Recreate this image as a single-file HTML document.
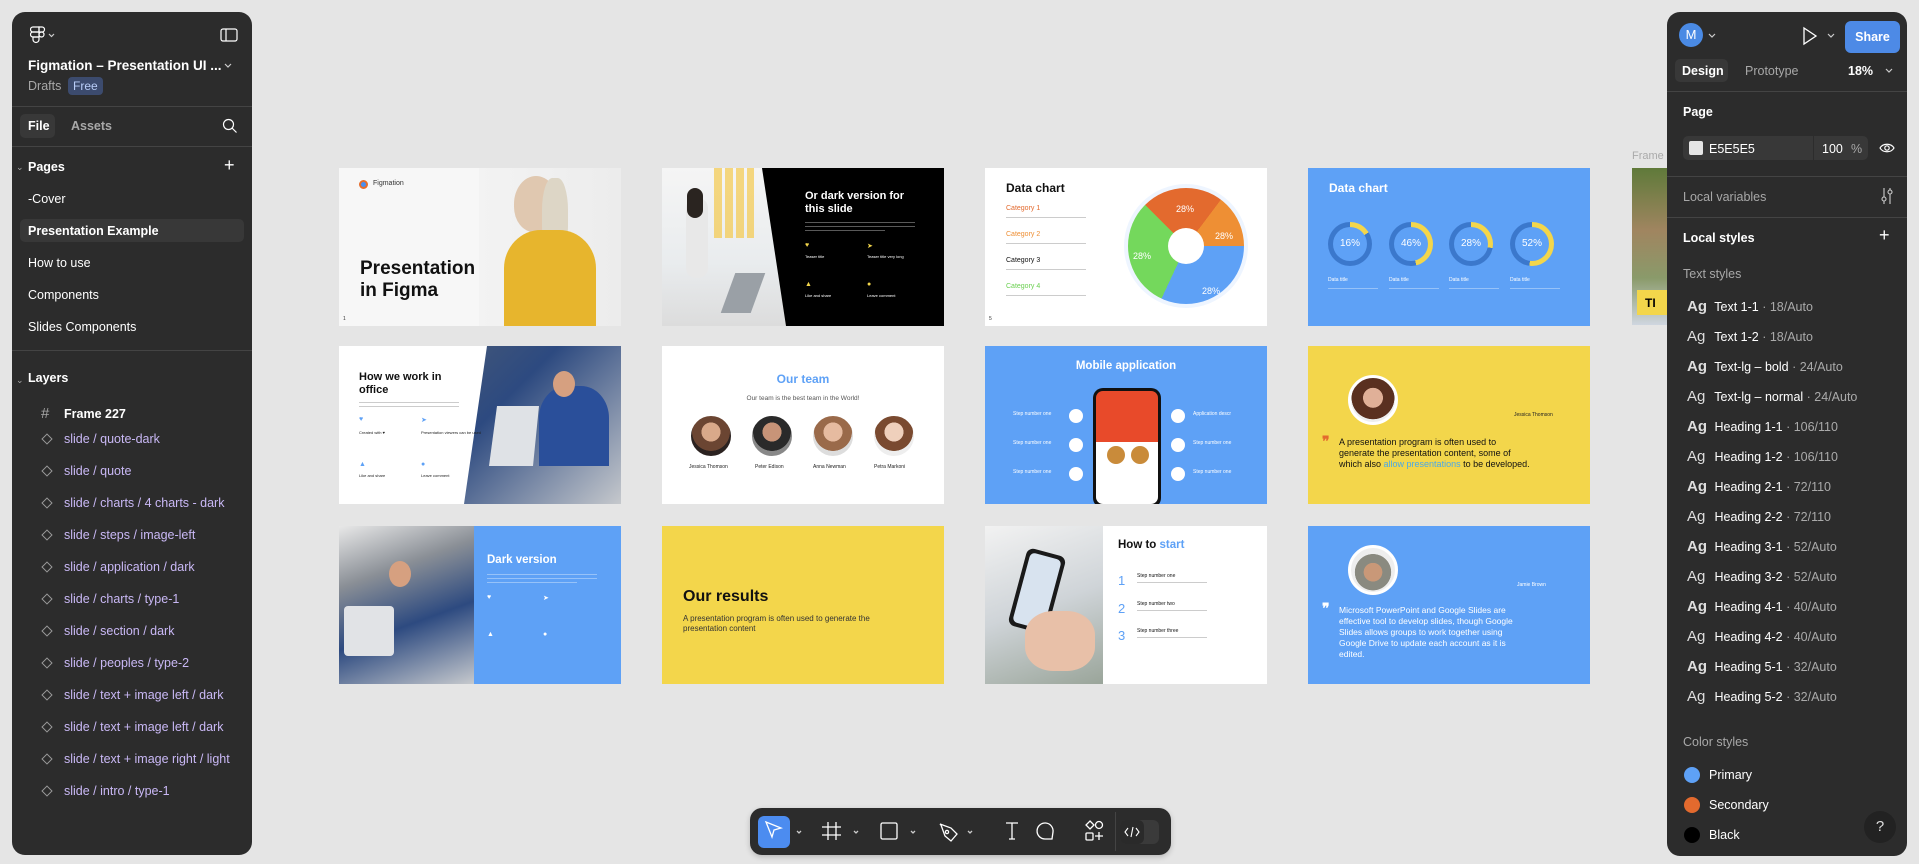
<!DOCTYPE html>
<html><head><meta charset="utf-8"><style>
*{box-sizing:border-box;margin:0;padding:0}
body{width:1919px;height:864px;background:#e5e5e5;font-family:"Liberation Sans",sans-serif;position:relative;overflow:hidden}
.a{position:absolute}
.panel{position:absolute;background:#2c2c2c;border-radius:13px;color:#fff;font-size:12.5px}
.sep{position:absolute;left:0;right:0;height:1px;background:#444}
.w{color:#fff}
.g{color:#a8a8a8}
.slide{position:absolute;width:282px;height:158px;overflow:hidden}
.lay{position:absolute;left:52px;color:#c9b8f5;font-size:12.5px}
.dia{position:absolute;left:31px;width:8px;height:8px;border:1.3px solid #999;transform:rotate(45deg)}
.ts{position:absolute;left:20px;font-size:12.5px;color:#fff}
.ts b{font-weight:400;font-size:15px;display:inline-block;width:24px;color:#ddd}
.ts span{color:#aaa}
.ring{position:absolute;width:44px;height:44px;border-radius:50%}
.ring i{position:absolute;left:5px;top:5px;width:34px;height:34px;border-radius:50%;background:#5ea1f6;color:#fff;font-style:normal;font-size:10px;text-align:center;line-height:34px}
.ln{position:absolute;height:2px;background:rgba(255,255,255,.35)}
.lnd{position:absolute;height:2px;background:#ccc}
.av{position:absolute;border-radius:50%;background:radial-gradient(circle at 50% 40%,#d9a98a 0 30%,#6b4532 31% 60%,#2b2220 61%);border:2px solid #fff}
</style></head><body>

<!-- LEFT PANEL -->
<div class="panel" style="left:12px;top:12px;width:240px;height:843px">
  <svg class="a" style="left:18px;top:14px" width="36" height="18" viewBox="0 0 36 18"><g fill="none" stroke="#fff" stroke-width="1.2"><path d="M3 1h6v5H3a2.5 2.5 0 010-5z"/><path d="M9 1h3a2.5 2.5 0 010 5H9z"/><path d="M3 6h6v5H3a2.5 2.5 0 010-5z"/><circle cx="11.5" cy="8.5" r="2.5"/><path d="M3 11h6v2.5a2.5 2.5 0 11-6-0z"/></g><path d="M19 8l2.5 2.5L24 8" stroke="#ccc" fill="none" stroke-width="1.2"/></svg>
  <svg class="a" style="left:208px;top:16px" width="18" height="14"><rect x="1" y="1" width="16" height="12" rx="2" fill="none" stroke="#fff" stroke-width="1.2"/><path d="M6 1v12" stroke="#fff" stroke-width="1.2"/></svg>
  <div class="a w" style="left:16px;top:46px;font-size:13.5px;font-weight:bold">Figmation – Presentation UI ...</div>
  <svg class="a" style="left:211px;top:50px" width="10" height="8"><path d="M2 2l3 3 3-3" stroke="#ccc" fill="none" stroke-width="1.2"/></svg>
  <div class="a g" style="left:16px;top:67px;font-size:12.5px">Drafts</div>
  <div class="a" style="left:56px;top:65px;background:#3c4b6e;color:#b9cdf8;border-radius:4px;padding:2px 5px;font-size:12px">Free</div>
  <div class="sep" style="top:94px"></div>
  <div class="a" style="left:8px;top:102px;width:35px;height:24px;background:#383838;border-radius:5px"></div>
  <div class="a w" style="left:16px;top:107px;font-weight:bold">File</div>
  <div class="a g" style="left:59px;top:107px;font-weight:bold">Assets</div>
  <svg class="a" style="left:210px;top:106px" width="16" height="16"><circle cx="6.5" cy="6.5" r="5" fill="none" stroke="#fff" stroke-width="1.2"/><path d="M10 10l4.5 4.5" stroke="#fff" stroke-width="1.2"/></svg>
  <div class="sep" style="top:134px"></div>
  <div class="a g" style="left:4px;top:150px;font-size:9px">⌄</div>
  <div class="a w" style="left:16px;top:148px;font-weight:bold">Pages</div>
  <div class="a w" style="left:212px;top:143px;font-size:18px;font-weight:300">+</div>
  <div class="a w" style="left:16px;top:180px">-Cover</div>
  <div class="a" style="left:8px;top:207px;width:224px;height:23px;background:#383838;border-radius:5px"></div>
  <div class="a w" style="left:16px;top:212px;font-weight:bold">Presentation Example</div>
  <div class="a w" style="left:16px;top:244px">How to use</div>
  <div class="a w" style="left:16px;top:276px">Components</div>
  <div class="a w" style="left:16px;top:308px">Slides Components</div>
  <div class="sep" style="top:338px"></div>
  <div class="a g" style="left:4px;top:363px;font-size:9px">⌄</div>
  <div class="a w" style="left:16px;top:359px;font-weight:bold">Layers</div>
  <div class="a g" style="left:29px;top:393px;font-size:15px">#</div>
  <div class="a w" style="left:52px;top:395px;font-weight:bold">Frame 227</div>
  <div class="dia" style="top:423px"></div><div class="lay" style="top:420px">slide / quote-dark</div>
  <div class="dia" style="top:455px"></div><div class="lay" style="top:452px">slide / quote</div>
  <div class="dia" style="top:487px"></div><div class="lay" style="top:484px">slide / charts / 4 charts - dark</div>
  <div class="dia" style="top:519px"></div><div class="lay" style="top:516px">slide / steps / image-left</div>
  <div class="dia" style="top:551px"></div><div class="lay" style="top:548px">slide / application / dark</div>
  <div class="dia" style="top:583px"></div><div class="lay" style="top:580px">slide / charts / type-1</div>
  <div class="dia" style="top:615px"></div><div class="lay" style="top:612px">slide / section / dark</div>
  <div class="dia" style="top:647px"></div><div class="lay" style="top:644px">slide / peoples / type-2</div>
  <div class="dia" style="top:679px"></div><div class="lay" style="top:676px">slide / text + image left / dark</div>
  <div class="dia" style="top:711px"></div><div class="lay" style="top:708px">slide / text + image left / dark</div>
  <div class="dia" style="top:743px"></div><div class="lay" style="top:740px">slide / text + image right / light</div>
  <div class="dia" style="top:775px"></div><div class="lay" style="top:772px">slide / intro / type-1</div>
</div>

<!-- ROW 1 -->
<div class="slide" style="left:339px;top:168px;background:#f7f7f7">
  <div class="a" style="left:140px;top:0;width:142px;height:158px;background:linear-gradient(90deg,#f3f3f3,#ececec)"></div>
  <div class="a" style="left:175px;top:8px;width:44px;height:56px;border-radius:50% 50% 45% 45%;background:#e0c8b0"></div>
  <div class="a" style="left:203px;top:10px;width:26px;height:80px;border-radius:40%;background:#ddd6c6"></div>
  <div class="a" style="left:165px;top:62px;width:92px;height:96px;border-radius:40% 40% 0 0;background:#e7b52d"></div>
  <div class="a" style="left:20px;top:12px;width:9px;height:9px;border-radius:50%;background:#4a8ff0;border:2px solid #e56d2c"></div>
  <div class="a" style="left:34px;top:12px;font-size:7px;color:#333">Figmation</div>
  <div class="a" style="left:21px;top:90px;font-size:19px;font-weight:bold;line-height:22px;color:#111">Presentation<br>in Figma</div>
  <div class="a" style="left:4px;top:148px;font-size:5px;color:#333">1</div>
</div>
<div class="slide" style="left:662px;top:168px;background:#f2f2f2">
  <div class="a" style="left:0;top:0;width:282px;height:158px;background:linear-gradient(180deg,#f5f5f5 0,#e9ecee 60%,#dcdcdc)"></div>
  <div class="a" style="left:52px;top:0;width:40px;height:70px;background:repeating-linear-gradient(90deg,#f4c94b 0 8px,transparent 8px 11px);opacity:.7"></div>
  <div class="a" style="left:24px;top:30px;width:22px;height:80px;background:#e8e8e8;border-radius:10px"></div>
  <div class="a" style="left:25px;top:20px;width:16px;height:30px;background:#2a2420;border-radius:8px"></div>
  <div class="a" style="left:66px;top:105px;width:30px;height:40px;background:#9aa0a6;transform:skewX(-20deg)"></div>
  <div class="a" style="left:0;top:0;width:282px;height:158px;background:#000;clip-path:polygon(100px 0,282px 0,282px 158px,124px 158px)"></div>
  <div class="a" style="left:143px;top:22px;font-size:11px;font-weight:bold;line-height:13px;color:#fff">Or dark version for<br>this slide</div>
  <div class="ln" style="left:143px;top:54px;width:110px;height:1px"></div><div class="ln" style="left:143px;top:58px;width:110px;height:1px"></div><div class="ln" style="left:143px;top:62px;width:80px;height:1px"></div>
  <div class="a" style="left:143px;top:74px;color:#f3d64b;font-size:7px">♥</div><div class="a" style="left:205px;top:74px;color:#f3d64b;font-size:7px">➤</div>
  <div class="a" style="left:143px;top:86px;color:#fff;font-size:4px">Teaser title</div><div class="a" style="left:205px;top:86px;color:#fff;font-size:4px">Teaser title very long</div>
  <div class="a" style="left:143px;top:113px;color:#f3d64b;font-size:7px">▲</div><div class="a" style="left:205px;top:113px;color:#f3d64b;font-size:7px">●</div>
  <div class="a" style="left:143px;top:125px;color:#fff;font-size:4px">Like and share</div><div class="a" style="left:205px;top:125px;color:#fff;font-size:4px">Leave comment</div>
</div>
<div class="slide" style="left:985px;top:168px;background:#fff">
  <div class="a" style="left:21px;top:13px;font-size:12px;font-weight:bold;color:#111">Data chart</div>
  <div class="a" style="left:21px;top:37px;font-size:7px;color:#e36a2e">Category 1</div>
  <div class="lnd" style="left:21px;top:49px;width:80px;height:1px"></div>
  <div class="a" style="left:21px;top:63px;font-size:7px;color:#ee8f34">Category 2</div>
  <div class="lnd" style="left:21px;top:75px;width:80px;height:1px"></div>
  <div class="a" style="left:21px;top:89px;font-size:7px;color:#111">Category 3</div>
  <div class="lnd" style="left:21px;top:101px;width:80px;height:1px"></div>
  <div class="a" style="left:21px;top:115px;font-size:7px;color:#6ad050">Category 4</div>
  <div class="lnd" style="left:21px;top:127px;width:80px;height:1px"></div>
  <div class="a" style="left:139px;top:16px;width:124px;height:124px;border-radius:50%;background:#eef5ff"></div>
  <div class="a" style="left:143px;top:20px;width:116px;height:116px;border-radius:50%;background:conic-gradient(from -45deg,#e36a2e 0 82deg,#ee8f34 82deg 135deg,#5ea1f6 135deg 250deg,#74d85c 250deg 360deg)"></div>
  <div class="a" style="left:183px;top:60px;width:36px;height:36px;border-radius:50%;background:#fff"></div>
  <div class="a" style="left:191px;top:36px;font-size:9px;color:#fff">28%</div>
  <div class="a" style="left:230px;top:63px;font-size:9px;color:#fff">28%</div>
  <div class="a" style="left:148px;top:83px;font-size:9px;color:#fff">28%</div>
  <div class="a" style="left:217px;top:118px;font-size:9px;color:#fff">28%</div>
  <div class="a" style="left:4px;top:148px;font-size:5px;color:#333">5</div>
</div>
<div class="slide" style="left:1308px;top:168px;background:#5ea1f6">
  <div class="a" style="left:21px;top:13px;font-size:12px;font-weight:bold;color:#fff">Data chart</div>
  <div class="ring" style="left:20px;top:54px;background:conic-gradient(#f3d64b 0 58deg,#3b78cc 58deg)"><i>16%</i></div>
  <div class="ring" style="left:81px;top:54px;background:conic-gradient(#f3d64b 0 166deg,#3b78cc 166deg)"><i>46%</i></div>
  <div class="ring" style="left:141px;top:54px;background:conic-gradient(#f3d64b 0 101deg,#3b78cc 101deg)"><i>28%</i></div>
  <div class="ring" style="left:202px;top:54px;background:conic-gradient(#f3d64b 0 187deg,#3b78cc 187deg)"><i>52%</i></div>
  <div class="a" style="left:20px;top:109px;font-size:5px;color:#fff">Data title</div><div class="a" style="left:81px;top:109px;font-size:5px;color:#fff">Data title</div><div class="a" style="left:141px;top:109px;font-size:5px;color:#fff">Data title</div><div class="a" style="left:202px;top:109px;font-size:5px;color:#fff">Data title</div>
  <div class="ln" style="left:20px;top:120px;width:50px;height:1px"></div><div class="ln" style="left:81px;top:120px;width:50px;height:1px"></div><div class="ln" style="left:141px;top:120px;width:50px;height:1px"></div><div class="ln" style="left:202px;top:120px;width:50px;height:1px"></div>
</div>
<div class="a" style="left:1632px;top:150px;font-size:11px;color:#aaa">Frame</div>
<div class="slide" style="left:1632px;top:168px;width:35px;height:157px;background:linear-gradient(180deg,#5f7a3a,#a08560 40%,#8a9a6a 70%,#cfd6e0)">
  <div class="a" style="left:5px;top:122px;width:30px;height:25px;background:#f3d64b;font-size:12px;font-weight:bold;padding:6px 0 0 8px">TI</div>
</div>

<!-- ROW 2 -->
<div class="slide" style="left:339px;top:346px;background:#fff">
  <div class="a" style="left:0;top:0;width:282px;height:158px;background:linear-gradient(135deg,#5a6470,#2d4a80 50%,#c5c8cc);clip-path:polygon(148px 0,282px 0,282px 158px,125px 158px)"></div>
  <div class="a" style="left:150px;top:60px;width:50px;height:60px;background:#dfe2e6;clip-path:polygon(8px 0,50px 0,44px 60px,0 60px)"></div>
  <div class="a" style="left:200px;top:40px;width:70px;height:80px;background:#2a4f9a;border-radius:40% 40% 0 0"></div>
  <div class="a" style="left:214px;top:25px;width:22px;height:26px;border-radius:50%;background:#d6a080"></div>
  <div class="a" style="left:20px;top:25px;font-size:11px;font-weight:bold;line-height:13px;color:#111">How we work in<br>office</div>
  <div class="lnd" style="left:20px;top:56px;width:100px;height:1px"></div><div class="lnd" style="left:20px;top:60px;width:100px;height:1px"></div>
  <div class="a" style="left:20px;top:70px;color:#5ea1f6;font-size:7px">♥</div><div class="a" style="left:82px;top:70px;color:#5ea1f6;font-size:7px">➤</div>
  <div class="a" style="left:20px;top:84px;color:#222;font-size:4px">Created with ♥</div><div class="a" style="left:82px;top:84px;color:#222;font-size:4px">Presentation viewers can be used</div>
  <div class="a" style="left:20px;top:115px;color:#5ea1f6;font-size:7px">▲</div><div class="a" style="left:82px;top:115px;color:#5ea1f6;font-size:7px">●</div>
  <div class="a" style="left:20px;top:127px;color:#222;font-size:4px">Like and share</div><div class="a" style="left:82px;top:127px;color:#222;font-size:4px">Leave comment</div>
</div>
<div class="slide" style="left:662px;top:346px;background:#fff">
  <div class="a" style="left:0;width:282px;top:26px;text-align:center;font-size:12px;color:#5ea1f6;font-weight:bold">Our team</div>
  <div class="a" style="left:0;width:282px;top:49px;text-align:center;font-size:6.5px;color:#555">Our team is the best team in the World!</div>
  <div class="av" style="left:27px;top:68px;width:44px;height:44px"></div>
  <div class="av" style="left:88px;top:68px;width:44px;height:44px;background:radial-gradient(circle at 50% 40%,#c89478 0 30%,#2a2a2a 31% 60%,#888 61%)"></div>
  <div class="av" style="left:149px;top:68px;width:44px;height:44px;background:radial-gradient(circle at 50% 40%,#e6bba0 0 30%,#9a6a4a 31% 60%,#ddd 61%)"></div>
  <div class="av" style="left:210px;top:68px;width:44px;height:44px;background:radial-gradient(circle at 50% 40%,#efd0bc 0 30%,#7a4a30 31% 60%,#eee 61%)"></div>
  <div class="a" style="left:27px;top:118px;font-size:5px;color:#222">Jessica Thomson</div><div class="a" style="left:93px;top:118px;font-size:5px;color:#222">Peter Edison</div><div class="a" style="left:151px;top:118px;font-size:5px;color:#222">Anna Newman</div><div class="a" style="left:212px;top:118px;font-size:5px;color:#222">Petra Markoni</div>
</div>
<div class="slide" style="left:985px;top:346px;background:#5ea1f6">
  <div class="a" style="left:0;width:282px;top:14px;text-align:center;font-size:11.5px;color:#fff;font-weight:bold">Mobile application</div>
  <div class="a" style="left:108px;top:42px;width:68px;height:120px;border-radius:10px;background:#111"></div>
  <div class="a" style="left:111px;top:45px;width:62px;height:113px;border-radius:7px;background:linear-gradient(180deg,#e84a2a 0 45%,#fff 45%)"></div>
  <div class="a" style="left:122px;top:100px;width:18px;height:18px;border-radius:50%;background:#c98b3a"></div>
  <div class="a" style="left:146px;top:100px;width:18px;height:18px;border-radius:50%;background:#c98b3a"></div>
  <div class="a" style="left:84px;top:63px;width:14px;height:14px;border-radius:50%;background:#fff"></div>
  <div class="a" style="left:84px;top:92px;width:14px;height:14px;border-radius:50%;background:#fff"></div>
  <div class="a" style="left:84px;top:121px;width:14px;height:14px;border-radius:50%;background:#fff"></div>
  <div class="a" style="left:186px;top:63px;width:14px;height:14px;border-radius:50%;background:#fff"></div>
  <div class="a" style="left:186px;top:92px;width:14px;height:14px;border-radius:50%;background:#fff"></div>
  <div class="a" style="left:186px;top:121px;width:14px;height:14px;border-radius:50%;background:#fff"></div>
  <div class="a" style="left:28px;top:65px;font-size:5px;color:#fff">Step number one</div><div class="a" style="left:28px;top:94px;font-size:5px;color:#fff">Step number one</div><div class="a" style="left:28px;top:123px;font-size:5px;color:#fff">Step number one</div>
  <div class="a" style="left:208px;top:65px;font-size:5px;color:#fff">Application descr</div><div class="a" style="left:208px;top:94px;font-size:5px;color:#fff">Step number one</div><div class="a" style="left:208px;top:123px;font-size:5px;color:#fff">Step number one</div>
</div>
<div class="slide" style="left:1308px;top:346px;background:#f3d64b">
  <div class="av" style="left:40px;top:29px;width:50px;height:50px;border-width:3px;background:radial-gradient(circle at 50% 45%,#e0b098 0 30%,#5a3020 31% 65%,#eee 66%)"></div>
  <div class="a" style="left:206px;top:66px;font-size:5px;color:#222">Jessica Thomson</div>
  <div class="a" style="left:14px;top:87px;font-size:14px;font-weight:bold;color:#e36a2e">❞</div>
  <div class="a" style="left:31px;top:91px;font-size:9px;line-height:11px;color:#111;width:240px">A presentation program is often used to<br>generate the presentation content, some of<br>which also <span style="color:#4aa8e8">allow presentations</span> to be developed.</div>
</div>

<!-- ROW 3 -->
<div class="slide" style="left:339px;top:526px;background:#5ea1f6">
  <div class="a" style="left:0;top:0;width:135px;height:158px;background:linear-gradient(160deg,#e8e8e8 0,#8a8f96 30%,#2d4a80 60%,#c6c9cd)"></div>
  <div class="a" style="left:5px;top:80px;width:50px;height:50px;background:#e1e3e6;border-radius:4px"></div>
  <div class="a" style="left:50px;top:35px;width:22px;height:26px;border-radius:50%;background:#d6a080"></div>
  <div class="a" style="left:148px;top:28px;font-size:11.5px;font-weight:bold;color:#fff">Dark version</div>
  <div class="ln" style="left:148px;top:48px;width:110px;height:1px"></div><div class="ln" style="left:148px;top:52px;width:110px;height:1px"></div><div class="ln" style="left:148px;top:56px;width:90px;height:1px"></div>
  <div class="a" style="left:148px;top:68px;color:#fff;font-size:7px">♥</div><div class="a" style="left:204px;top:68px;color:#fff;font-size:7px">➤</div>
  <div class="a" style="left:148px;top:105px;color:#fff;font-size:7px">▲</div><div class="a" style="left:204px;top:105px;color:#fff;font-size:7px">●</div>
</div>
<div class="slide" style="left:662px;top:526px;background:#f3d64b">
  <div class="a" style="left:21px;top:62px;font-size:16px;font-weight:bold;color:#111">Our results</div>
  <div class="a" style="left:21px;top:88px;font-size:8px;line-height:10px;color:#333">A presentation program is often used to generate the<br>presentation content</div>
</div>
<div class="slide" style="left:985px;top:526px;background:#fff">
  <div class="a" style="left:0;top:0;width:118px;height:158px;background:linear-gradient(160deg,#f2f2f2,#cfd4d8 50%,#9aa59a)"></div>
  <div class="a" style="left:32px;top:25px;width:40px;height:80px;background:#1a1a1a;border-radius:7px;transform:rotate(15deg)"></div>
  <div class="a" style="left:36px;top:29px;width:32px;height:72px;background:#d8e3ef;border-radius:5px;transform:rotate(15deg)"></div>
  <div class="a" style="left:40px;top:85px;width:70px;height:60px;background:#e8c0a8;border-radius:40%"></div>
  <div class="a" style="left:133px;top:13px;font-size:11.5px;font-weight:bold;color:#111">How to <span style="color:#5ea1f6">start</span></div>
  <div class="a" style="left:133px;top:47px;font-size:13px;color:#5ea1f6">1</div><div class="a" style="left:133px;top:75px;font-size:13px;color:#5ea1f6">2</div><div class="a" style="left:133px;top:102px;font-size:13px;color:#5ea1f6">3</div>
  <div class="a" style="left:152px;top:47px;font-size:5px;color:#111">Step number one</div><div class="a" style="left:152px;top:75px;font-size:5px;color:#111">Step number two</div><div class="a" style="left:152px;top:102px;font-size:5px;color:#111">Step number three</div>
  <div class="lnd" style="left:152px;top:56px;width:70px;height:1px"></div><div class="lnd" style="left:152px;top:84px;width:70px;height:1px"></div><div class="lnd" style="left:152px;top:111px;width:70px;height:1px"></div>
</div>
<div class="slide" style="left:1308px;top:526px;background:#5ea1f6">
  <div class="av" style="left:40px;top:19px;width:50px;height:50px;border-width:3px;background:radial-gradient(circle at 50% 55%,#c99878 0 28%,#8a8a80 29% 55%,#eee 56%)"></div>
  <div class="a" style="left:209px;top:56px;font-size:5px;color:#fff">Jamie Brown</div>
  <div class="a" style="left:14px;top:74px;font-size:14px;font-weight:bold;color:#fff">❞</div>
  <div class="a" style="left:31px;top:79px;font-size:8.5px;line-height:11px;color:#fff;width:240px">Microsoft PowerPoint and Google Slides are<br>effective tool to develop slides, though Google<br>Slides allows groups to work together using<br>Google Drive to update each account as it is<br>edited.</div>
</div>

<!-- TOOLBAR -->
<div class="a" style="left:750px;top:808px;width:421px;height:47px;background:#2c2c2c;border-radius:12px;box-shadow:0 2px 6px rgba(0,0,0,.2)"></div>
<div class="a" style="left:758px;top:816px;width:32px;height:32px;background:#4c8cf0;border-radius:6px"></div>
<svg class="a" style="left:750px;top:808px" width="421" height="47" viewBox="0 0 421 47" fill="none" stroke="#fff" stroke-width="1.3">
  <path d="M16 14l15 6-7 2-2 7z"/>
  <path d="M47 23l2 2 2-2" stroke="#ccc"/>
  <path d="M78 14v18M86 14v18M72 19h19M72 27h19"/>
  <path d="M104 23l2 2 2-2" stroke="#ccc"/>
  <rect x="131" y="15" width="16" height="16" rx="1.5"/>
  <path d="M161 23l2 2 2-2" stroke="#ccc"/>
  <path d="M190 16l11 4 6 6-6 7-6-5-4-11z"/><circle cx="197" cy="24" r="1.6"/>
  <path d="M218 23l2 2 2-2" stroke="#ccc"/>
  <path d="M256 15h12M262 15v16M259 31h6"/>
  <path d="M302 31h-7a8 8 0 118-7z"/>
  <path d="M340 13l4 4-4 4-4-4z"/><circle cx="349" cy="17" r="3.5"/><rect x="336" y="25" width="7" height="7" rx="1"/><path d="M349 24v8M345 28h8"/>
</svg>
<div class="a" style="left:1115px;top:812px;width:1px;height:39px;background:#444"></div>
<div class="a" style="left:1120px;top:820px;width:39px;height:24px;background:#3a3a3a;border-radius:6px"></div>
<div class="a" style="left:1120px;top:820px;width:24px;height:24px;background:#2a2a2a;border-radius:6px"></div>
<svg class="a" style="left:1124px;top:826px" width="16" height="12" fill="none" stroke="#fff" stroke-width="1.1"><path d="M4 2L1 6l3 4M12 2l3 4-3 4M9 1L7 11"/></svg>

<!-- RIGHT PANEL -->
<div class="panel" style="left:1667px;top:12px;width:240px;height:844px">
  <div class="a" style="left:12px;top:11px;width:24px;height:24px;border-radius:50%;background:#4a8ae4;color:#fff;font-size:13px;text-align:center;line-height:24px">M</div>
  <svg class="a" style="left:40px;top:20px" width="10" height="8"><path d="M2 2l3 3 3-3" stroke="#ccc" fill="none" stroke-width="1.2"/></svg>
  <svg class="a" style="left:134px;top:14px" width="18" height="20"><path d="M3 2l12 8-12 8z" fill="none" stroke="#fff" stroke-width="1.3"/></svg>
  <svg class="a" style="left:159px;top:20px" width="10" height="8"><path d="M2 2l3 3 3-3" stroke="#ccc" fill="none" stroke-width="1.2"/></svg>
  <div class="a" style="left:178px;top:9px;width:55px;height:32px;background:#4d8ae6;border-radius:6px;color:#fff;font-size:12.5px;font-weight:bold;text-align:center;line-height:32px">Share</div>
  <div class="a" style="left:8px;top:47px;width:53px;height:23px;background:#383838;border-radius:5px"></div>
  <div class="a w" style="left:15px;top:52px;font-weight:bold">Design</div>
  <div class="a g" style="left:78px;top:52px">Prototype</div>
  <div class="a w" style="left:181px;top:52px;font-weight:bold">18%</div>
  <svg class="a" style="left:217px;top:55px" width="10" height="8"><path d="M2 2l3 3 3-3" stroke="#ccc" fill="none" stroke-width="1.2"/></svg>
  <div class="sep" style="top:79px"></div>
  <div class="a w" style="left:16px;top:93px;font-weight:bold">Page</div>
  <div class="a" style="left:16px;top:124px;width:185px;height:24px;background:#383838;border-radius:5px"></div>
  <div class="a" style="left:146px;top:124px;width:1px;height:24px;background:#2c2c2c"></div>
  <div class="a" style="left:22px;top:129px;width:14px;height:14px;background:#e5e5e5;border-radius:2px"></div>
  <div class="a w" style="left:42px;top:130px">E5E5E5</div>
  <div class="a w" style="left:155px;top:130px">100</div>
  <div class="a g" style="left:184px;top:130px">%</div>
  <svg class="a" style="left:212px;top:129px" width="16" height="14"><path d="M1 7c3-5 11-5 14 0-3 5-11 5-14 0z" fill="none" stroke="#fff" stroke-width="1.2"/><circle cx="8" cy="7" r="2.2" fill="none" stroke="#fff" stroke-width="1.2"/></svg>
  <div class="sep" style="top:164px"></div>
  <div class="a g" style="left:16px;top:178px">Local variables</div>
  <svg class="a" style="left:213px;top:175px" width="14" height="18" fill="none" stroke="#ccc" stroke-width="1.1"><path d="M4 1v16M10 1v16"/><circle cx="4" cy="12" r="2" fill="#2c2c2c"/><circle cx="10" cy="5" r="2" fill="#2c2c2c"/></svg>
  <div class="sep" style="top:205px"></div>
  <div class="a w" style="left:16px;top:219px;font-weight:bold">Local styles</div>
  <div class="a w" style="left:212px;top:213px;font-size:18px;font-weight:300">+</div>
  <div class="a g" style="left:16px;top:255px">Text styles</div>
  <div class="ts" style="top:286px"><b style="font-weight:bold">Ag</b> Text 1-1 <span>· 18/Auto</span></div>
  <div class="ts" style="top:316px"><b>Ag</b> Text 1-2 <span>· 18/Auto</span></div>
  <div class="ts" style="top:346px"><b style="font-weight:bold">Ag</b> Text-lg – bold <span>· 24/Auto</span></div>
  <div class="ts" style="top:376px"><b>Ag</b> Text-lg – normal <span>· 24/Auto</span></div>
  <div class="ts" style="top:406px"><b style="font-weight:bold">Ag</b> Heading 1-1 <span>· 106/110</span></div>
  <div class="ts" style="top:436px"><b>Ag</b> Heading 1-2 <span>· 106/110</span></div>
  <div class="ts" style="top:466px"><b style="font-weight:bold">Ag</b> Heading 2-1 <span>· 72/110</span></div>
  <div class="ts" style="top:496px"><b>Ag</b> Heading 2-2 <span>· 72/110</span></div>
  <div class="ts" style="top:526px"><b style="font-weight:bold">Ag</b> Heading 3-1 <span>· 52/Auto</span></div>
  <div class="ts" style="top:556px"><b>Ag</b> Heading 3-2 <span>· 52/Auto</span></div>
  <div class="ts" style="top:586px"><b style="font-weight:bold">Ag</b> Heading 4-1 <span>· 40/Auto</span></div>
  <div class="ts" style="top:616px"><b>Ag</b> Heading 4-2 <span>· 40/Auto</span></div>
  <div class="ts" style="top:646px"><b style="font-weight:bold">Ag</b> Heading 5-1 <span>· 32/Auto</span></div>
  <div class="ts" style="top:676px"><b>Ag</b> Heading 5-2 <span>· 32/Auto</span></div>
  <div class="a g" style="left:16px;top:723px">Color styles</div>
  <div class="a" style="left:17px;top:755px;width:16px;height:16px;border-radius:50%;background:#5ea1f6"></div>
  <div class="a w" style="left:42px;top:756px">Primary</div>
  <div class="a" style="left:17px;top:785px;width:16px;height:16px;border-radius:50%;background:#e36a2e"></div>
  <div class="a w" style="left:42px;top:786px">Secondary</div>
  <div class="a" style="left:17px;top:815px;width:16px;height:16px;border-radius:50%;background:#000"></div>
  <div class="a w" style="left:42px;top:816px">Black</div>
  <div class="a" style="left:197px;top:799px;width:32px;height:32px;border-radius:50%;background:#222;color:#ddd;text-align:center;line-height:32px;font-size:15px">?</div>
</div>
</body></html>
